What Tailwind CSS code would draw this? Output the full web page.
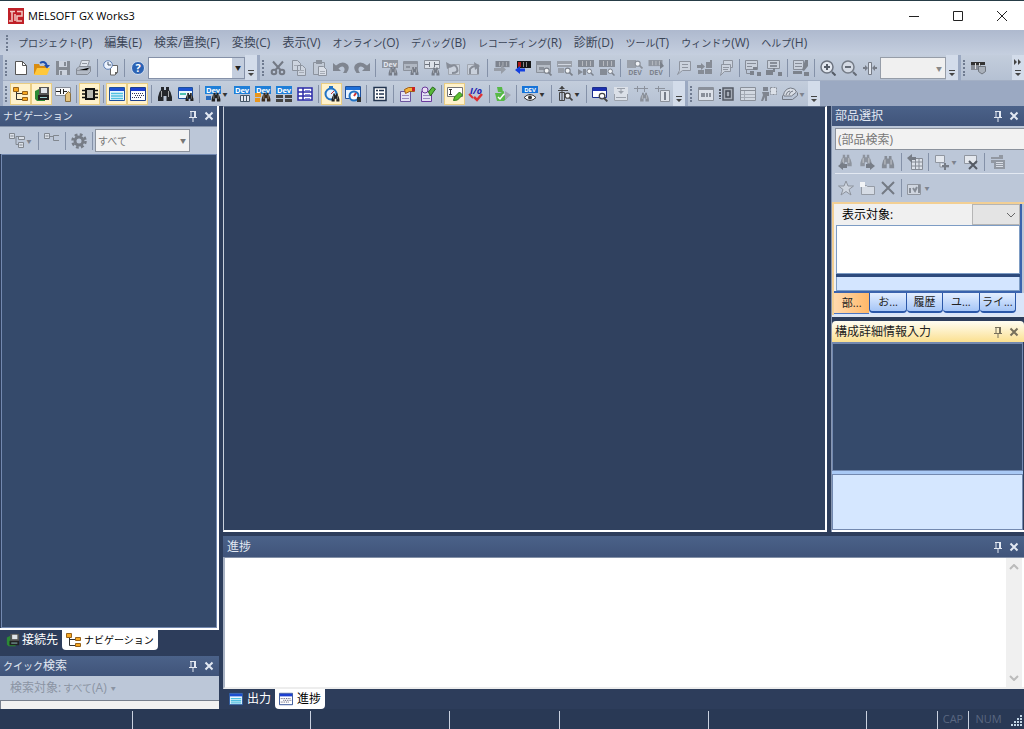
<!DOCTYPE html>
<html lang="ja">
<head>
    <meta charset="UTF-8">
    <meta name="viewport" content="width=device-width, initial-scale=1.0">
    <title>MELSOFT GX Works3</title>
    <script src="https://cdn.jsdelivr.net/npm/@tailwindcss/browser@4"></script>
</head>
<body class="h-screen min-h-[600px] flex flex-col overflow-hidden bg-[#2d3d5b] text-xs leading-4 text-[#333] font-['Open_Sans','Noto_Sans_CJK_JP',sans-serif]">

    <!-- icon sprite -->
    <svg class="hidden" xmlns="http://www.w3.org/2000/svg">
        <symbol id="bino" viewBox="0 0 16 16"><path fill="currentColor" d="M4 1h3v3h2V1h3v3l1.500 2L15 11v4H9.500v-5h-3v5H1v-4l1.500-5L4 4z"/><path stroke="#fff" stroke-opacity=".6" d="M4.500 5v6M11.500 5v6"/></symbol>
        <symbol id="mag" viewBox="0 0 16 16"><circle cx="6.500" cy="6.500" r="4.500" fill="#fff" fill-opacity=".8" stroke="currentColor" stroke-width="2"/><path stroke="currentColor" stroke-width="3" d="M10 10l5 5"/></symbol>
        <symbol id="plc" viewBox="0 0 16 8"><path fill="currentColor" d="M0 0h16v7H0z"/><path stroke="#fff" stroke-opacity=".4" d="M4.500 1v5M8.500 1v5M12.500 1v5"/></symbol>

        <symbol id="new" viewBox="0 0 16 16"><path fill="#fff" stroke="#555" d="M2.500 1.500h7l4 4v9h-11z"/><path fill="none" stroke="#555" d="M9.500 1.500v4h4"/></symbol>
        <symbol id="open" viewBox="0 0 16 16"><path fill="#d98c10" d="M0 4h5l1 2h7v8H0z"/><path fill="#ffc83c" d="M3 8h13l-3 7H0z"/><path fill="none" stroke="#1f4fae" stroke-width="2" d="M6 3q5-3 7 3"/><path fill="#1f4fae" d="M10 5h6l-3 3.500z"/></symbol>
        <symbol id="save" viewBox="0 0 16 16"><path fill="#858b94" d="M1 1h14v14H1z"/><path fill="#ccd3de" d="M4 1h8v6H4zM4 10h8v5H4z"/><path fill="#858b94" d="M9 2h2v4H9zM5 11h2v4H5z"/></symbol>
        <symbol id="print" viewBox="0 0 16 16"><path fill="#dfe4ec" stroke="#8f959f" d="M5.500.500h8l-2 6h-8z"/><path fill="#b4bbc6" stroke="#858b95" d="M3 6.500h11.500v5l-3 3H.500V9z"/><path stroke="#8f959f" d="M1 10.500h10l3-3M6 3.500h5"/></symbol>
        <symbol id="clock" viewBox="0 0 16 16"><path fill="#fff" stroke="#666" d="M7.500 5.500h7v7l-2.500 2.500H7.500z"/><path fill="#666" d="M12 12h3l-3 3z"/><circle cx="5" cy="5" r="4.300" fill="#eef4ff" stroke="#5e7fb5"/><path fill="none" stroke="#456" d="M5 2v3h3"/></symbol>
        <symbol id="help" viewBox="0 0 16 16"><circle cx="8" cy="8" r="6.500" fill="#2c63b4" stroke="#d5e0f0"/><text x="8" y="12" font-size="11" font-weight="700" fill="#fff" text-anchor="middle">?</text></symbol>
        <symbol id="cut" viewBox="0 0 16 16"><g fill="none" stroke="#737984" stroke-width="2"><circle cx="4" cy="12" r="2.300"/><circle cx="12" cy="12" r="2.300"/><path d="M5.500 10L13 1.500M10.500 10L3 1.500"/></g></symbol>
        <symbol id="copy" viewBox="0 0 16 16"><path fill="#cdd4df" stroke="#8c939e" d="M1.500.500h5l3 3v7h-8zM6.500 5.500h5l3 3v7h-8z"/><path stroke="#a5abb5" d="M8 10.500h5M8 12.500h5M3 5.500h3"/></symbol>
        <symbol id="paste" viewBox="0 0 16 16"><path fill="#c2cad6" stroke="#8c939e" d="M1.500 2.500h11v12h-11z"/><path fill="#8c939e" d="M4 0h6v4H4z"/><path fill="#d9dee7" stroke="#8c939e" d="M6.500 6.500h5l3 3v6h-8z"/><path stroke="#a5abb5" d="M8 11.500h5M8 13.500h5"/></symbol>
        <symbol id="undo" viewBox="0 0 16 16"><path fill="#7f8590" d="M0 3v8h8L5.500 8.500Q9 5 11 7.500q1.500 2.500-1 5.500h3.500q4-5 1-8.500-5-4.500-11.500 1z"/></symbol>
        <symbol id="redo" viewBox="0 0 16 16"><path fill="#7f8590" d="M16 3v8H8l2.500-2.500Q7 5 5 7.500 3.500 10 6 13H2.500q-4-5-1-8.500 5-4.500 11.500 1z"/></symbol>
        <symbol id="g-devfind" viewBox="0 0 16 16"><path fill="#8f959f" d="M0 0h16v8H0z"/><text x="8" y="7" font-size="7" font-weight="700" fill="#e4e8ef" text-anchor="middle">Dev</text><use href="#bino" x="6" y="6" width="10" height="10" color="#767c87"/></symbol>
        <symbol id="g-find" viewBox="0 0 16 16"><path fill="#b0b7c2" stroke="#8c929d" d="M.500 1.500h14v9H.500z"/><path stroke="#8c929d" stroke-width="2" d="M1 3h13M3 7h4"/><use href="#bino" x="7" y="6" width="9" height="10" color="#767c87"/></symbol>
        <symbol id="g-ladfind" viewBox="0 0 16 16"><path fill="#dde2ea" stroke="#8c929d" d="M.500.500h15v8H.500z"/><path stroke="#6e747f" d="M1 4.500h4m6 0h4M5.500 2v5m5-5v5"/><use href="#bino" x="7" y="7" width="9" height="9" color="#767c87"/></symbol>
        <symbol id="g-prev" viewBox="0 0 16 16"><path fill="#c9d0db" stroke="#a0a6b0" d="M3.500 4.500h11v10h-11z"/><path fill="none" stroke="#878d98" stroke-width="2" d="M5 7q5-4 7 1t-5 5"/><path fill="#878d98" d="M1 2l1 7 6-3z"/></symbol>
        <symbol id="g-next" viewBox="0 0 16 16"><path fill="#c9d0db" stroke="#a0a6b0" d="M1.500 4.500h11v10h-11z"/><path fill="none" stroke="#878d98" stroke-width="2" d="M4 14V9q4-5 8-1v6"/><path fill="#878d98" d="M8 2l6 4-5 4z"/></symbol>
        <symbol id="g-read" viewBox="0 0 16 16"><use href="#plc" x="1" y="1" width="15" height="7" color="#7d838e"/><path fill="#979da7" d="M0 8h7V5l5 4.500L7 14v-3H0z"/></symbol>
        <symbol id="write" viewBox="0 0 16 16"><path fill="#151515" d="M2 1h14v7H2z"/><path fill="#b01818" d="M3 2h3v5H3z"/><path stroke="#888" d="M8.500 2v5M11.500 2v5"/><path fill="#1440e0" d="M0 10l5-4v2.500h5v3H5V14z"/></symbol>
        <symbol id="g-mon1" viewBox="0 0 16 16"><path fill="#b5bcc6" stroke="#8b919b" d="M.500 1.500h14v11H.500z"/><path fill="#8b919b" d="M0 1h15v4H0zM3 7h5v3H3z"/><use href="#mag" x="7" y="7" width="9" height="9" color="#7b818b"/></symbol>
        <symbol id="g-mon2" viewBox="0 0 16 16"><path fill="#9aa0aa" d="M0 1h15v6H0zM1 8h6v5H1z"/><path stroke="#d2d8e2" d="M1 4.500h13"/><use href="#mag" x="7" y="7" width="9" height="9" color="#7b818b"/></symbol>
        <symbol id="g-mon3" viewBox="0 0 16 16"><use href="#plc" x="0" y="0" width="16" height="8" color="#858b95"/><path fill="#858b95" d="M0 9l5 3-5 3zM5 9h3v6H5z"/><use href="#mag" x="8" y="8" width="8" height="8" color="#7b818b"/></symbol>
        <symbol id="g-mon4" viewBox="0 0 16 16"><use href="#plc" x="0" y="0" width="16" height="8" color="#858b95"/><path fill="#858b95" d="M1 9h7v6H1z"/><use href="#mag" x="8" y="8" width="8" height="8" color="#7b818b"/></symbol>
        <symbol id="g-dev1" viewBox="0 0 16 16"><path fill="#9aa0aa" d="M0 0h9v8H0z"/><use href="#mag" x="7" y="0" width="9" height="9" color="#8a909a"/><text x="8" y="15" font-size="7" font-weight="700" fill="#7d838e" text-anchor="middle">DEV</text></symbol>
        <symbol id="g-dev2" viewBox="0 0 16 16"><use href="#plc" x="0" y="0" width="15" height="7" color="#9096a0"/><path fill="#7b818b" d="M12 1l4 5-4 3z"/><text x="8" y="15" font-size="7" font-weight="700" fill="#7d838e" text-anchor="middle">DEV</text></symbol>
        <symbol id="g-note" viewBox="0 0 16 16"><path fill="#ccd3de" stroke="#8f95a0" d="M3.500 1.500h11v9h-8l-5 4 2-4z"/><path stroke="#8f95a0" d="M6 4.500h6M6 7.500h6"/></symbol>
        <symbol id="g-swap" viewBox="0 0 16 16"><path fill="#868c96" d="M0 5h4V3l4 3.500L4 10V8H0zM9 2h6v6H9zM1 10h6v4H1zM8 9h7v5H8z"/><path stroke="#868c96" stroke-width="2" d="M14 0v4"/></symbol>
        <symbol id="g-notes" viewBox="0 0 16 16"><path fill="#ccd3de" stroke="#8f95a0" d="M5.500.500h9v7h-9z"/><path fill="#ccd3de" stroke="#8f95a0" d="M3.500 4.500h9v7h-6l-4 4 1-4z"/><path stroke="#8f95a0" d="M5 7.500h6M5 9.500h5"/></symbol>
        <symbol id="g-blk1" viewBox="0 0 16 16"><path fill="#c9d0db" stroke="#878d98" d="M.500.500h12v9H.500z"/><path fill="none" stroke="#878d98" d="M2 3.500h9M2 6.500h5M1.500 10v3.500h5"/><path fill="#7c828c" d="M8 7h4v3H8zM5 11h4v4H5zM12 12h4v4h-4z"/></symbol>
        <symbol id="g-blk2" viewBox="0 0 16 16"><path fill="#c9d0db" stroke="#878d98" d="M1.500.500h12v8h-12z"/><path stroke="#878d98" stroke-width="2" d="M4 3h7M4 6h7"/><path fill="#7c828c" d="M0 10h7v5H0zM7 8h2v4H7zM12 12h4v4h-4z"/></symbol>
        <symbol id="g-blk3" viewBox="0 0 16 16"><path fill="#c9d0db" stroke="#878d98" d="M.500.500h10v9H.500z"/><path stroke="#878d98" d="M2 3.500h7M2 6.500h7"/><path fill="#7c828c" d="M12 0h3v6l-4 5-2-1zM0 11h9v3H0zM11 12h5v4h-5z"/></symbol>
        <symbol id="zoomin" viewBox="0 0 16 16"><circle cx="7" cy="7" r="6" fill="#e2e7ef" stroke="#6d7480" stroke-width="1.500"/><path stroke="#555c67" stroke-width="2" d="M4 7h6M7 4v6M12 12l3.500 3.500"/></symbol>
        <symbol id="zoomout" viewBox="0 0 16 16"><circle cx="7" cy="7" r="6" fill="#d5dbe5" stroke="#757c87" stroke-width="1.500"/><path stroke="#656c77" stroke-width="2" d="M4 7h6M12 12l3.500 3.500"/></symbol>
        <symbol id="g-fit" viewBox="0 0 16 16"><path fill="#e2e7ef" stroke="#767c87" d="M6.500 2.500h3v12h-3z"/><path fill="#767c87" d="M1 7h2V5l3 3-3 3V9H1zM15 7h-2V5l-3 3 3 3V9h2z"/></symbol>
        <symbol id="g-plcdb" viewBox="0 0 16 16"><path fill="#333" d="M0 2h14v3H0z"/><path fill="#868c96" d="M0 5h10v5H0z"/><path stroke="#ddd" d="M4.500 3v6M8.500 3v4"/><path fill="#a9b0ba" stroke="#70767f" d="M7.500 6.500h7v5l-3.500 2.500-3.500-2.500z"/></symbol>

        <symbol id="tree" viewBox="0 0 16 16"><g fill="#f7a823" stroke="#96621a"><path d="M.500 1.500h5v4h-5zM9.500 5.500h5v3h-5zM9.500 11.500h5v3h-5z"/></g><path fill="none" stroke="#333" d="M3.500 6v7.500H9M3.500 7.500H9"/></symbol>
        <symbol id="conn" viewBox="0 0 16 16"><path fill="#2c8a36" d="M1 5l4-2v9h6v3H3l-2-2z"/><path fill="#555" d="M5 1h10v9H5z"/><path fill="#dfe3e8" d="M7 2h6v5H7z"/><path fill="#222" d="M4 9h11v5H4z"/><path stroke="#9cc" d="M6 11.500h7"/></symbol>
        <symbol id="ladder" viewBox="0 0 16 16"><path fill="#f7f8fa" stroke="#868c96" d="M.500 1.500h15v8H.500z"/><path stroke="#222" d="M1 5.500h4m4 0h3M5.500 3v5M8.500 3v5"/><path fill="#e3c27c" stroke="#8a7040" d="M10.500 8.500l3-3 2 2v8h-5z"/></symbol>
        <symbol id="chip" viewBox="0 0 16 16"><path fill="#b9b9b2" stroke="#111" stroke-width="2" d="M4 3h8v10H4z"/><path stroke="#111" stroke-width="1.500" d="M0 4.500h3M0 8h3M0 11.500h3M13 4.500h3M13 8h3M13 11.500h3"/></symbol>
        <symbol id="win" viewBox="0 0 16 16"><path fill="#e9f7ff" stroke="#1d4f9c" d="M.500 1.500h15v13H.500z"/><path fill="#1c4fd0" d="M1 2h14v3H1z"/><path stroke="#4fc0e0" stroke-width="1.500" d="M2 7.500h12M2 10h12M2 12.500h12"/></symbol>
        <symbol id="winlist" viewBox="0 0 16 16"><path fill="#fff" stroke="#1d3f8c" d="M.500 1.500h15v13H.500z"/><path fill="#1c3fd0" d="M1 2h14v3H1z"/><path stroke="#335" stroke-dasharray="1 1" d="M2 7.500h12M5 9.500h9M2 11.500h10"/></symbol>
        <symbol id="winfind" viewBox="0 0 16 16"><path fill="#eaf8ff" stroke="#1d4f9c" d="M.500 1.500h14v11H.500z"/><path fill="#1f55d0" d="M1 2h13v3H1z"/><path stroke="#4fc0b0" stroke-width="2" d="M2 8h6"/><use href="#bino" x="7" y="6" width="9" height="10" color="#222"/></symbol>
        <symbol id="find" viewBox="0 0 16 16"><use href="#bino" width="16" height="16" color="#25282c"/></symbol>
        <symbol id="devfind" viewBox="0 0 16 16"><path fill="#1f7fd8" d="M0 0h16v8H0z"/><text x="8" y="7" font-size="7.500" font-weight="700" fill="#fff" text-anchor="middle">Dev</text><path fill="#2a6dc0" d="M1 10h5v4H1z"/><use href="#bino" x="6" y="6" width="10" height="10" color="#222"/></symbol>
        <symbol id="devtab" viewBox="0 0 16 16"><path fill="#1f7fd8" d="M0 0h16v8H0z"/><text x="8" y="7" font-size="7.500" font-weight="700" fill="#fff" text-anchor="middle">Dev</text><path fill="#e5e9f0" stroke="#456" d="M6.500 9.500h9v6h-9zM9.500 10v5M12.500 10v5"/></symbol>
        <symbol id="devorg" viewBox="0 0 16 16"><path fill="#1f7fd8" d="M0 0h16v8H0z"/><text x="8" y="7" font-size="7.500" font-weight="700" fill="#fff" text-anchor="middle">Dev</text><path fill="#e8951c" d="M0 7h6v4H0zM0 12h5v4H0z"/><use href="#bino" x="6" y="6" width="10" height="10" color="#3a2a1c"/></symbol>
        <symbol id="devbox" viewBox="0 0 16 16"><path fill="#1f7fd8" d="M0 0h16v8H0z"/><text x="8" y="7" font-size="7.500" font-weight="700" fill="#fff" text-anchor="middle">Dev</text><path fill="#444" d="M0 9h7v3H0zM9 9h7v3H9zM0 13h7v3H0zM9 13h7v3H9z"/></symbol>
        <symbol id="grid" viewBox="0 0 16 16"><path fill="#fff" stroke="#2b2ba8" stroke-width="1.500" d="M1 2h14v12H1zM1 6h14M1 10h14M6 2v12"/><path fill="#7f86d8" d="M8 4h5v1H8zM8 8h5v1H8zM8 12h5v1H8z"/></symbol>
        <symbol id="watch" viewBox="0 0 16 16"><circle cx="7" cy="8" r="5.500" fill="#e4f3ff" stroke="#2173c4" stroke-width="2"/><path fill="#2173c4" d="M5 0h4v2H5z"/><path stroke="#c33" d="M7 8l3-3"/><use href="#bino" x="7" y="7" width="9" height="9" color="#222"/></symbol>
        <symbol id="watchwin" viewBox="0 0 16 16"><path fill="#e9f4ff" stroke="#1d4f9c" d="M.500.500h15v12H.500z"/><path fill="#1f6fd8" d="M1 1h14v3H1z"/><circle cx="9" cy="10" r="4.500" fill="#fff" stroke="#2173c4" stroke-width="2"/><path stroke="#c33" stroke-width="2" d="M9 10l2-3"/><path fill="#333" d="M12 11h4v5h-4z"/></symbol>
        <symbol id="sheet" viewBox="0 0 16 16"><path fill="#fff" stroke="#22344f" stroke-width="1.500" d="M2 1.500h12v13H2z"/><path stroke="#22344f" stroke-width="1.500" d="M4 4.500h2M4 8h2M4 11.500h2M7 4.500h5M7 8h5M7 11.500h5"/></symbol>
        <symbol id="prop" viewBox="0 0 16 16"><path fill="#e5e2f5" stroke="#6a559c" d="M1.500 5.500h10v10h-10z"/><path stroke="#9a8bc0" d="M3 9.500h7M3 12.500h7"/><path fill="#f2b43c" stroke="#a05c18" d="M5.500 3.500l4-2h6v4h-5l-4 2z"/><path fill="#c22" d="M13 1h3v4h-3z"/></symbol>
        <symbol id="propok" viewBox="0 0 16 16"><path fill="#e5e2f5" stroke="#6a3a9c" d="M1.500 5.500h10v10h-10z"/><path stroke="#9a8bc0" d="M3 9.500h7M3 12.500h7"/><circle cx="5" cy="4" r="3" fill="#e9dcf5" stroke="#6a3a9c"/><path fill="#58b83a" stroke="#2b6a1c" d="M8.500 6l4-5 3 2-5 7z"/></symbol>
        <symbol id="edit" viewBox="0 0 16 16"><path fill="#fff" stroke="#777" d="M.500 1.500h15v9H.500z"/><path stroke="#333" d="M2 3.500h3M3.500 4v4M2 8.500h3"/><path fill="#5cbf2c" stroke="#2f7a18" d="M6.500 14.500l1-3.500 5-5 3 3-5 5z"/></symbol>
        <symbol id="io" viewBox="0 0 16 16"><text x="8" y="8" font-size="9" font-weight="700" font-style="italic" fill="#2020b0" text-anchor="middle">I/o</text><path fill="none" stroke="#d33" stroke-width="2" d="M1 8l4 4"/><path fill="none" stroke="#d33" stroke-width="2.500" d="M6 11l3 3 5-6"/></symbol>
        <symbol id="run" viewBox="0 0 16 16"><path fill="#57b947" d="M2 1h5l1 5h-5zM0 7h5l4-2v4l4 2-4 4H2z"/><path fill="#a0a6b0" d="M10 5l6 4-6 5z"/><path fill="none" stroke="#fff" stroke-width="1.500" d="M3 11l2 2 4-5"/></symbol>
        <symbol id="eye" viewBox="0 0 16 16"><path fill="#1673d8" d="M0 0h16v7H0z"/><text x="8" y="6" font-size="6" font-weight="700" fill="#fff" text-anchor="middle">DEV</text><path fill="#fff" stroke="#333" d="M2 11.500q6-6 12 0-6 6-12 0z"/><circle cx="8" cy="11.500" r="2" fill="#333"/></symbol>
        <symbol id="pos" viewBox="0 0 16 16"><path fill="none" stroke="#444" d="M5 0v15M1 4.500h10M2.500 6.500h5v8h-5z"/><path fill="#444" d="M5 0l3 3H2z"/><use href="#mag" x="7" y="6" width="9" height="9" color="#444"/></symbol>
        <symbol id="winmag" viewBox="0 0 16 16"><path fill="#fff" stroke="#1c2f8c" d="M.500 1.500h14v10H.500z"/><path fill="#1c2fb0" d="M1 2h13v3H1z"/><use href="#mag" x="6" y="6" width="10" height="10" color="#444"/></symbol>
        <symbol id="g-lad1" viewBox="0 0 16 16"><path fill="#dbe0e8" d="M1 1h14v14H1z"/><path fill="none" stroke="#9ba1ab" d="M1.500 8v6.500h13V8M4 2.500h8M8 3v4M3 11.500h10"/><path fill="#9ba1ab" d="M5 5h6l-3 3z"/></symbol>
        <symbol id="g-lad2" viewBox="0 0 16 16"><path stroke="#8c929d" d="M0 2.500h14M3.500 0v6M10.500 0v6"/><use href="#bino" x="5" y="6" width="11" height="10" color="#8a909a"/></symbol>
        <symbol id="g-lad3" viewBox="0 0 16 16"><path stroke="#8c929d" d="M0 2.500h10M3.500 0v6"/><path fill="#dfe3ea" stroke="#8a909a" d="M5.500 4.500h9v11h-9z"/><path stroke="#777d88" stroke-width="2" d="M10 6v8"/></symbol>
        <symbol id="g-win" viewBox="0 0 16 16"><path fill="#dce1e9" stroke="#8a909a" d="M.500 1.500h15v13H.500z"/><path fill="#8a909a" d="M1 2h14v2H1zM3 7h4v4H3zM8 7h2v4H8zM11 7h2v4h-2z"/></symbol>
        <symbol id="g-mod" viewBox="0 0 16 16"><path fill="#a6acb6" stroke="#555b65" stroke-width="1.500" d="M4 2h10v12H4z"/><path fill="none" stroke="#444a54" stroke-width="1.500" d="M7 5h4v6H7z"/><path stroke="#555b65" stroke-dasharray="2 1" stroke-width="2" d="M1 3v10"/></symbol>
        <symbol id="g-list" viewBox="0 0 16 16"><path fill="#d2d8e1" stroke="#8a909a" d="M.500 1.500h15v13H.500zM.500 4.500h15"/><path stroke="#a5abb5" d="M1 8.500h14M1 11.500h14M4.500 5v9"/></symbol>
        <symbol id="g-man" viewBox="0 0 16 16"><path fill="#7f8590" d="M2 1h5v4H2zM1 6h7v4H6v5H4v-4l-2 4H0l2-6z"/><path fill="#dce1e9" stroke="#8a909a" stroke-dasharray="2 1" d="M9.500 1.500h6v7h-6z"/></symbol>
        <symbol id="g-disk" viewBox="0 0 16 16"><path fill="#d9dee6" stroke="#747a85" d="M1.500 9q1-6 7-7 5 0 6 4l-5 4H2z"/><path fill="none" stroke="#747a85" d="M4 9q1-4 4-4M7 9q1-4 4-4M.500 9.500v4h10l5-4v-3"/></symbol>

        <symbol id="g-tree1" viewBox="0 0 16 16"><path fill="#dce1e9" stroke="#81878f" d="M.500.500h5v5h-5zM9.500 3.500h6v3h-6zM9.500 9.500h5v5h-5z"/><path fill="none" stroke="#81878f" d="M1.500 3h3M7 3.500v8M7 3.500h3M7 11.500h3M10.500 12h3"/></symbol>
        <symbol id="g-tree2" viewBox="0 0 16 16"><path fill="#dce1e9" stroke="#81878f" d="M.500.500h5v5h-5z"/><path fill="none" stroke="#81878f" d="M1.500 3h3M15 2.500H9.500v5H15M6 3.500h3"/></symbol>
        <symbol id="gear" viewBox="0 0 16 16"><circle cx="8" cy="8" r="6.500" fill="none" stroke="#767c86" stroke-width="2.500" stroke-dasharray="2.800 2.300"/><circle cx="8" cy="8" r="4" fill="none" stroke="#767c86" stroke-width="3"/></symbol>
        <symbol id="g-bino1" viewBox="0 0 16 16"><use href="#bino" x="1" width="14" height="13" color="#8e949e"/><path fill="#777d87" d="M0 12l5-4v2h4v4H5v2z"/></symbol>
        <symbol id="g-bino2" viewBox="0 0 16 16"><use href="#bino" width="14" height="13" color="#8e949e"/><path fill="#777d87" d="M16 12l-5-4v2H7v4h4v2z"/></symbol>
        <symbol id="g-bino" viewBox="0 0 16 16"><use href="#bino" x="1" y="1" width="14" height="14" color="#868c96"/></symbol>
        <symbol id="g-table" viewBox="0 0 16 16"><path fill="#dce1e9" stroke="#868c96" d="M4.500 4.500h11v11h-11zM4.500 8h11M4.500 12h11M8.500 4v11M12 4v11"/><path fill="#767c86" d="M0 4l5-4v3h4v3H5v3z"/></symbol>
        <symbol id="g-add" viewBox="0 0 16 16"><path fill="#e4e8ee" stroke="#9096a0" d="M1.500 1.500h9v7h-9zM6 9v4h9"/><path stroke="#767c86" stroke-width="2" d="M11 9v7M8 12h7"/></symbol>
        <symbol id="g-remove" viewBox="0 0 16 16"><path fill="#e4e8ee" stroke="#9096a0" d="M1.500 1.500h12v8h-12z"/><path stroke="#555b65" stroke-width="2" d="M6 7l8 8M14 7l-8 8"/></symbol>
        <symbol id="g-props" viewBox="0 0 16 16"><path fill="#9298a2" d="M1 3h8V1h4v4H1zM1 6h14v9H4v-6H1z"/><path stroke="#d8dde6" d="M6 8.500h7M6 10.500h7M6 12.500h7"/></symbol>
        <symbol id="g-star" viewBox="0 0 16 16"><path fill="#ced5df" stroke="#8d939d" d="M8 1l2 5h5.500l-4.500 3.500 2 5.500-5-3.500L3 15l2-5.500L.500 6H6z"/></symbol>
        <symbol id="g-folder" viewBox="0 0 16 16"><path fill="#d6dce5" stroke="#959ba5" d="M2.500 5.500h5l1 1h7v8h-13z"/><path fill="#f2f4f7" d="M1 2h5v5H1z"/></symbol>
        <symbol id="g-x" viewBox="0 0 16 16"><path stroke="#747a84" stroke-width="2" d="M2 2l12 12M14 2L2 14"/></symbol>
        <symbol id="g-ref" viewBox="0 0 16 16"><path fill="#d0d6e0" stroke="#9096a0" d="M.500 4.500h13v10H.500z"/><path fill="none" stroke="#868c96" stroke-width="2" d="M3 8v5M6 8l2 3 2-4M12 5v8"/></symbol>

        <symbol id="pin" viewBox="0 0 10 12"><path fill="none" stroke="currentColor" d="M2 1.500h5M3 1v6M1 7.500h8M5 8v4"/><path stroke="currentColor" stroke-width="2" d="M7 1v6"/></symbol>
        <symbol id="close" viewBox="0 0 10 10"><path stroke="currentColor" stroke-width="2" d="M1.500 1.500l7 7M8.500 1.500l-7 7"/></symbol>
    </svg>

    <!-- title bar -->
    <header class="h-[30px] shrink-0 flex items-center bg-white border-t border-[#263c46]">
        <svg class="size-4 ml-2 mr-1" viewBox="0 0 16 16"><path fill="#bf2027" d="M0 0h16v16H0z"/><path fill="none" stroke="#f3c9c4" stroke-width="1.500" d="M2 3.500h5M4 3v9M7 6v7M1 13h4M9 3.500h5V8H9v5h5"/></svg>
        <h1 class="text-[11px] text-black">MELSOFT GX Works3</h1>
        <div class="ml-auto flex text-[#222]">
            <button class="w-11 h-7 flex items-center justify-center" aria-label="最小化"><svg class="size-3" viewBox="0 0 12 12"><path stroke="currentColor" d="M1 6.500h10"/></svg></button>
            <button class="w-11 h-7 flex items-center justify-center" aria-label="最大化"><svg class="size-3" viewBox="0 0 12 12"><path fill="none" stroke="currentColor" d="M1.500 1.500h9v9h-9z"/></svg></button>
            <button class="w-11 h-7 flex items-center justify-center" aria-label="閉じる"><svg class="size-3" viewBox="0 0 12 12"><path stroke="currentColor" d="M1 1l10 10M11 1L1 11"/></svg></button>
        </div>
    </header>

    <!-- menu bar, kana is set smaller than kanji -->
    <nav class="h-[25px] shrink-0 flex items-center bg-linear-to-b from-[#aeb9ce] to-[#c5cfdf] text-[#3b4557]">
        <i class="ml-1.5 mr-2.5 h-4 w-0.5 border-l-2 border-dotted border-[#6f7b90]"></i>
        <div class="flex items-baseline gap-3 whitespace-nowrap">
            <button><span class="text-[10px]">プロジェクト</span>(P)</button>
            <button>編集(E)</button>
            <button>検索/置換(F)</button>
            <button>変換(C)</button>
            <button>表示(V)</button>
            <button><span class="text-[10px]">オンライン</span>(O)</button>
            <button><span class="text-[10px]">デバッグ</span>(B)</button>
            <button><span class="text-[10px]">レコーディング</span>(R)</button>
            <button>診断(D)</button>
            <button><span class="text-[10px]">ツール</span>(T)</button>
            <button><span class="text-[10px]">ウィンドウ</span>(W)</button>
            <button><span class="text-[10px]">ヘルプ</span>(H)</button>
        </div>
    </nav>

    <!-- toolbars -->
    <div class="shrink-0 bg-[#9ba9c2] flex flex-col">
        <div class="h-[26px] flex gap-[3px] pl-[3px]">
            <div class="flex items-center bg-linear-to-b from-[#c3cddc] to-[#b5c1d3] border-b border-[#a3afc4]">
                <div data-bar="grip new open save print | clock | help" class="flex items-center"></div>
                <div class="relative w-[97px] h-[22px]">
                    <select aria-label="検索文字列" class="appearance-none w-full h-full bg-white border border-[#8591a8]"></select>
                    <span class="absolute right-px top-px bottom-px w-3 bg-[#c4cede] pointer-events-none flex items-center justify-center text-[6px] text-[#222]">▼</span>
                </div>
                <div data-bar="more" class="flex h-full"></div>
            </div>
            <div class="flex items-center bg-linear-to-b from-[#c3cddc] to-[#b5c1d3] border-b border-[#a3afc4]">
                <div data-bar="grip cut copy paste undo redo || g-devfind g-find g-ladfind g-prev g-next || g-read write g-mon1 g-mon2 g-mon3 g-mon4 || g-dev1 g-dev2 || g-note g-swap g-notes | g-blk1 g-blk2 | g-blk3 | zoomin zoomout g-fit" class="flex items-center"></div>
                <div class="relative w-[66px] h-[22px]">
                    <select aria-label="表示倍率" class="appearance-none w-full h-full bg-[#f0f0f0] border border-[#969da8]" disabled></select>
                    <span class="absolute right-1 top-2 text-[6px] leading-2 text-[#888] pointer-events-none">▼</span>
                </div>
                <div data-bar="more" class="flex h-full"></div>
            </div>
            <div class="flex flex-1 items-center bg-linear-to-b from-[#c3cddc] to-[#b5c1d3] border-b border-[#a3afc4]">
                <div data-bar="grip g-plcdb" class="flex items-center"></div>
                <button aria-label="その他のボタン" class="ml-auto w-3 h-full bg-[#d3dcea] flex flex-col items-center justify-between py-1"><svg class="w-2 h-1.5" viewBox="0 0 8 6"><path fill="#444" d="M0 0l3 3-3 3zM4 0l3 3-3 3z"/></svg><svg class="w-1.5 h-1.5" viewBox="0 0 6 6"><path fill="#444" d="M0 0h6v1H0zM0 3h6L3 6z"/></svg></button>
            </div>
        </div>
        <div class="h-[25px] flex gap-[3px] pl-[3px]">
            <div data-bar="grip *tree *conn ladder | *chip | *win *winlist | find winfind | devfind+ devtab devorg devbox grid | *watch watchwin | sheet | prop propok | *edit io | run | eye+ | pos+ | winmag g-lad1 g-lad2 g-lad3 more" class="flex items-center bg-linear-to-b from-[#c3cddc] to-[#b5c1d3]"></div>
            <div data-bar="grip g-win g-mod g-list g-man g-disk+ more" class="flex items-center bg-linear-to-b from-[#c3cddc] to-[#b5c1d3]"></div>
        </div>
    </div>

    <main class="flex-1 min-h-0 flex gap-1">
        <!-- left column -->
        <aside class="w-[219px] shrink-0 flex flex-col">
            <section class="flex-1 min-h-0 flex flex-col border-r-2 border-b-2 border-white">
                <div data-head class="h-5 shrink-0 flex items-center pl-[3px] pr-[3px] bg-linear-to-b from-[#4b6289] to-[#40547a] text-[#e2e8f2]"><h2 class="flex-1 text-[10px]">ナビゲーション</h2></div>
                <div class="h-7 shrink-0 flex items-center pl-1.5 bg-[#bcc7d8] border-t border-[#8491a8]">
                    <div data-bar="g-tree1+ | g-tree2 | gear |" class="flex items-center"></div>
                    <div class="relative w-[95px] h-[23px]">
                        <select aria-label="表示対象の絞り込み" class="appearance-none w-full h-full pl-0.5 bg-[#f2f2f2] border border-[#8b929d] text-[10px] text-[#777]"><option>すべて</option></select>
                        <span class="absolute right-1 top-2 text-[6px] leading-2 text-[#777] pointer-events-none">▼</span>
                    </div>
                </div>
                <div class="flex-1 ml-px bg-[#354a6b] border border-[#7389b0]"></div>
            </section>
            <div class="h-[26px] shrink-0 flex items-start text-white">
                <button class="h-5 pl-1.5 pr-1 flex items-center gap-0.5"><svg class="size-3.5"><use href="#conn"/></svg>接続先</button>
                <button class="h-5 pl-1 pr-1 flex items-center gap-0.5 bg-white text-black rounded-b-sm text-[10px]"><svg class="size-4"><use href="#tree"/></svg>ナビゲーション</button>
            </div>
            <section class="h-[53px] shrink-0 flex flex-col">
                <div data-head class="h-5 shrink-0 flex items-center pl-[3px] pr-[5px] bg-linear-to-b from-[#4b6289] to-[#40547a] text-[#e2e8f2]"><h2 class="flex-1"><span class="text-[10px]">クイック</span>検索</h2></div>
                <div class="h-[25px] shrink-0 flex items-center pl-2.5 bg-[#bcc7d8] border-b border-[#777f8d] text-[#8b94a3]">
                    <button class="flex items-baseline">検索対象: <span class="text-[10px] ml-0.5">すべて</span>(A) <span class="text-[5px] ml-1 self-center">▼</span></button>
                </div>
                <input type="text" aria-label="クイック検索" class="flex-1 min-h-0 w-full bg-[#f1f1f1] border-l border-[#777f8d]">
            </section>
        </aside>

        <div class="flex-1 min-w-0 flex flex-col gap-1">
            <div class="flex-1 min-h-0 flex gap-1">
                <!-- work area -->
                <div class="flex-1 bg-[#30415f] border-t border-l border-t-[#5a6a86] border-l-[#c9d0dc] border-r-2 border-b-2 border-r-white border-b-white"></div>

                <!-- right column -->
                <aside class="w-[193px] shrink-0 flex flex-col border-l border-[#8796b0]">
                    <section class="h-[211px] shrink-0 flex flex-col border-b-2 border-[#dfe7f3] bg-[#bcc7d8]">
                        <div data-head class="h-5 shrink-0 flex items-center pl-[3px] pr-[5px] bg-linear-to-b from-[#4b6289] to-[#40547a] text-[#e2e8f2]"><h2 class="flex-1">部品選択</h2></div>
                        <input type="text" placeholder="(部品検索)" aria-label="部品検索" class="ml-[3px] mt-0.5 h-[22px] shrink-0 pl-0.5 bg-[#f2f2f2] border border-r-0 border-[#8b929d] placeholder:text-[#777]">
                        <div data-bar="g-bino1 g-bino2 g-bino | g-table | g-add+ g-remove | g-props" class="ml-[3px] h-6 shrink-0 flex items-center border-b border-[#e3e9f2]"></div>
                        <div data-bar="g-star g-folder g-x | g-ref+" class="ml-[3px] h-7 shrink-0 flex items-center"></div>
                        <div class="flex-1 min-h-0 flex flex-col border-t-2 border-l-2 border-[#f2cf94]">
                            <div class="flex-1 min-h-0 mr-0.5 pl-0.5 flex flex-col bg-[#f0f0f0] border-r-2 border-b-2 border-[#3a63ad]">
                                <div class="h-[21px] shrink-0 flex items-center pl-1.5 text-black">
                                    <label for="target" class="flex-1">表示対象:</label>
                                    <div class="relative w-12 h-full">
                                        <select id="target" class="appearance-none w-full h-full bg-[#e4e4e4] border border-[#b5b5b5]"></select>
                                        <svg class="absolute right-1 top-2 w-2.5 h-1.5 pointer-events-none" viewBox="0 0 10 6"><path fill="none" stroke="#666" d="M1 1l4 4 4-4"/></svg>
                                    </div>
                                </div>
                                <div class="flex-1 bg-white border border-[#7d9cc4]"></div>
                                <div class="h-[3px] bg-[#2d4a7c]"></div>
                                <div class="h-3.5 bg-[#d3e5ff] border-b border-x border-[#7d9cc4]"></div>
                            </div>
                            <div class="h-[22px] shrink-0 flex items-start text-[11px] text-[#222] bg-[#d9e5fa] pr-2">
                                <button class="flex-1 h-[21px] bg-linear-to-r from-[#ffd9ad] to-[#ffb868] border-b border-[#4a76c4]">部...</button>
                                <button class="flex-1 h-5 bg-linear-to-b from-[#e3eeff] to-[#a5c5f6] border-l border-b-2 border-r border-[#2a57a8] rounded-b-sm">お...</button>
                                <button class="flex-1 h-5 bg-linear-to-b from-[#e3eeff] to-[#a5c5f6] border-b-2 border-r border-[#2a57a8] rounded-b-sm">履歴</button>
                                <button class="flex-1 h-5 bg-linear-to-b from-[#e3eeff] to-[#a5c5f6] border-b-2 border-r border-[#2a57a8] rounded-b-sm">ユ...</button>
                                <button class="flex-1 h-5 bg-linear-to-b from-[#e3eeff] to-[#a5c5f6] border-b-2 border-r border-[#2a57a8] rounded-b-sm">ライ...</button>
                            </div>
                        </div>
                    </section>
                    <section class="flex-1 min-h-0 mt-1 flex flex-col border-b-2 border-white">
                        <div data-head class="h-[21px] shrink-0 flex items-center pl-[3px] pr-[5px] bg-linear-to-b from-[#fffdf2] to-[#fbe08f] rounded-t-sm text-[#77705c]"><h2 class="flex-1 text-[#222]">構成詳細情報入力</h2></div>
                        <div class="flex-1 mr-px bg-[#354a6b] border border-[#7389b0] border-t-2"></div>
                        <div class="h-[3px] mr-px bg-[#a9c9f5]"></div>
                        <div class="h-14 mr-px bg-[#d5e7ff] border border-[#7389b0]"></div>
                    </section>
                </aside>
            </div>

            <!-- progress pane -->
            <section class="h-[173px] shrink-0 flex flex-col">
                <div data-head class="h-[21px] shrink-0 flex items-center pl-1 pr-[5px] bg-linear-to-b from-[#4b6289] to-[#40547a] text-[#e2e8f2]"><h2 class="flex-1">進捗</h2></div>
                <div class="flex-1 min-h-0 flex bg-white border-l-2 border-t border-b-2 border-l-[#a9b3c4] border-t-[#8491a8] border-b-[#ededed]">
                    <div class="flex-1"></div>
                    <div class="w-4 mr-0.5 bg-[#f0f0f0] flex flex-col justify-between items-center py-1.5">
                        <svg class="w-2.5 h-1.5" viewBox="0 0 10 6"><path fill="none" stroke="#bbb" stroke-width="2" d="M1 5l4-4 4 4"/></svg>
                        <svg class="w-2.5 h-1.5" viewBox="0 0 10 6"><path fill="none" stroke="#bbb" stroke-width="2" d="M1 1l4 4 4-4"/></svg>
                    </div>
                </div>
                <div class="h-5 shrink-0 flex items-start text-white">
                    <button class="h-5 pl-1.5 pr-1 flex items-center gap-1"><svg class="size-3.5"><use href="#win"/></svg>出力</button>
                    <button class="h-5 px-1 flex items-center gap-1 bg-white text-black rounded-b-sm"><svg class="size-3.5"><use href="#winlist"/></svg>進捗</button>
                </div>
            </section>
        </div>
    </main>

    <!-- status bar -->
    <footer class="h-5 shrink-0 flex justify-end bg-[#293955] pt-0.5 text-[#5a6780]">
        <div class="flex-1 border-r border-[#c9d1df]"></div>
        <div class="w-[178px] border-r border-[#c9d1df]"></div>
        <div class="w-[139px] border-r border-[#c9d1df]"></div>
        <div class="w-[110px] border-r border-[#c9d1df]"></div>
        <div class="w-[149px] border-r border-[#c9d1df]"></div>
        <div class="w-[158px] border-r border-[#c9d1df]"></div>
        <div class="w-[71px] border-r border-[#c9d1df]"></div>
        <div class="w-[31px] border-r border-[#c9d1df] text-center text-[11px]">CAP</div>
        <div class="w-[39px] text-center text-[11px]">NUM</div>
        <svg class="w-4 h-4 mt-0.5" viewBox="0 0 16 16"><path fill="#c3d6e6" d="M12 2h2v2h-2zM9 5h2v2H9zM12 5h2v2h-2zM6 8h2v2H6zM9 8h2v2H9zM12 8h2v2h-2zM3 11h2v2H3zM6 11h2v2H6zM9 11h2v2H9zM12 11h2v2h-2z"/></svg>
    </footer>

    <script>
        // "*" = checked button, "+" = button with a drop-down arrow, "g-" = grey icon
        const parts = {
            'grip': '<i class="ml-0.5 mr-[3px] h-4 border-l-2 border-dotted border-[#6f7b90]"></i>',
            '|': '<i class="w-[6px] h-[18px] flex justify-center"><i class="w-px h-full bg-[#8491a8]"></i></i>',
            '||': '<i class="w-[7px] h-[18px] flex justify-center"><i class="w-px h-full bg-[#8491a8]"></i></i>',
            'more': '<button aria-label="ツールバー オプション" class="w-3 self-stretch bg-[#d3dcea] flex items-end justify-center pb-1"><svg class="w-1.5 h-1.5" viewBox="0 0 6 6"><path fill="#444" d="M0 0h6v1H0zM0 3h6L3 6z"/></svg></button>'
        };

        function toolButton(item) {
            const name = item.replace(/[*+]/g, '');
            const icon = `<svg class="size-4 shrink-0"><use href="#${name}"/></svg>`;
            if (item.startsWith('*')) {
                return `<button aria-label="${name}" aria-pressed="true" class="w-[21px] h-[22px] flex items-center justify-center bg-[#fff2cc] border border-[#e8cd84]">${icon}</button>`;
            }
            if (item.endsWith('+')) {
                const color = name.startsWith('g-') ? 'text-[#7d838e]' : 'text-[#333]';
                return `<button aria-label="${name}" class="w-[29px] h-[22px] flex items-center justify-center ${color}">${icon}<span class="text-[5px] ml-px">▼</span></button>`;
            }
            return `<button aria-label="${name}" class="w-[21px] h-[22px] flex items-center justify-center">${icon}</button>`;
        }

        document.querySelectorAll('[data-bar]').forEach((bar) => {
            bar.innerHTML = bar.dataset.bar.split(' ').map((item) => parts[item] || toolButton(item)).join('');
        });

        document.querySelectorAll('[data-head]').forEach((head) => {
            head.insertAdjacentHTML('beforeend',
                '<button class="mr-1.5" aria-label="自動的に隠す"><svg class="w-2.5 h-3"><use href="#pin"/></svg></button>' +
                '<button aria-label="閉じる"><svg class="size-2.5"><use href="#close"/></svg></button>');
        });
    </script>
</body>
</html>
